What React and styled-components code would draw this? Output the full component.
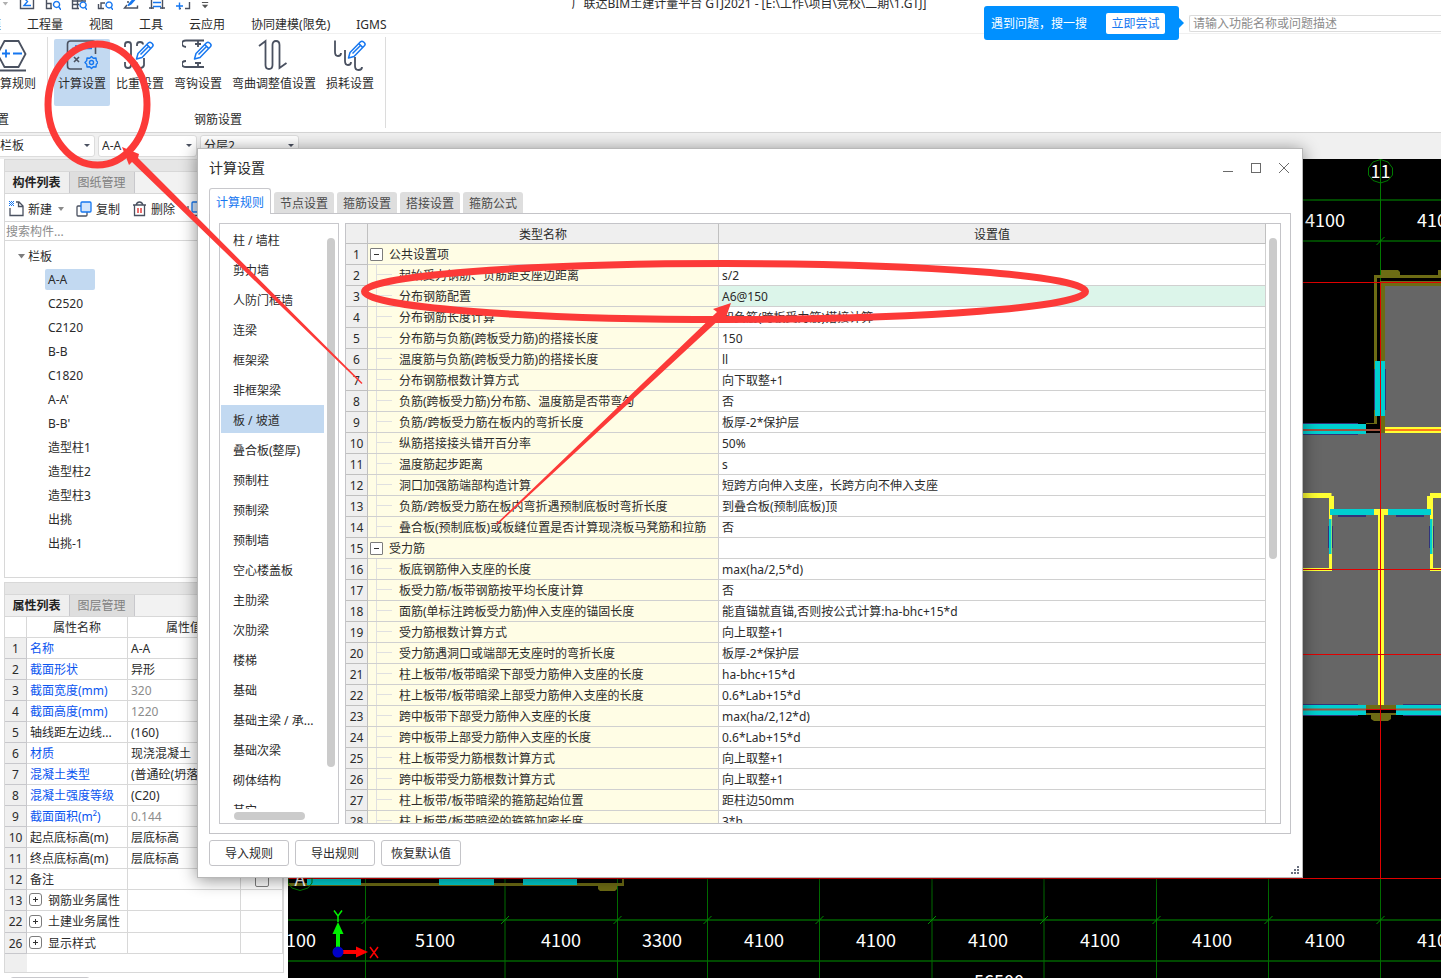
import React from "react";
import styled, { createGlobalStyle, css } from "styled-components";

const GlobalStyle = createGlobalStyle`
  * { box-sizing: border-box; }
  html, body { margin: 0; height: 100%; }
  body, button, input, select, table {
    font-family: "Noto Sans", "Noto Sans CJK SC", sans-serif;
    font-size: 12px;
    color: #2b2b2b;
  }
  button { cursor: pointer; }
  ul { list-style: none; margin: 0; padding: 0; }
`;

const blue = "#1677f0";
const ink = "#4a5160";
const line = "#d8d8d8";
const red = "#fc3a38";

/* ---------- window frame ---------- */

const Screen = styled.div`
  position: relative;
  display: flex;
  flex-direction: column;
  height: 100vh;
  overflow: hidden;
  background: #fff;
`;

const TitleBar = styled.header`
  display: flex;
  align-items: flex-end;
  height: 14px;
  overflow: hidden;
`;

const QuickTools = styled.div`
  flex: 1;
  display: flex;
  align-items: center;
  gap: 10px;
  height: 16px;
  margin-bottom: 4px;
`;

const QuickButton = styled.button`
  border: 0;
  padding: 0;
  background: none;
  width: ${(p) => (p.$narrow ? 9 : 16)}px;
  height: 16px;
  svg { display: block; width: 100%; height: 16px; }
`;

const AppTitle = styled.h1`
  flex: none;
  margin: 0;
  font-size: 12px;
  font-weight: 400;
  line-height: 16px;
  padding-bottom: 2px;
`;

const TitleRest = styled.div`
  flex: 1;
  margin-right: -57px;
`;

const MenuRow = styled.nav`
  flex: none;
  display: flex;
  align-items: center;
  gap: 26px;
  height: 20px;
  margin-left: -23px;
  border-bottom: 1px solid #f0f0f0;
`;

const MenuItem = styled.button`
  flex: none;
  border: 0;
  padding: 2px 0 0;
  background: none;
  line-height: 17px;
`;

const HelpSearch = styled.input`
  margin-left: auto;
  width: 252px;
  height: 17px;
  padding: 0 3px;
  border: 1px solid #dcdcdc;
  border-right: 0;
  border-radius: 2px 0 0 2px;
  &::placeholder { color: #8c8c8c; }
`;

const Callout = styled.aside`
  position: absolute;
  top: 6px;
  right: 262px;
  display: flex;
  align-items: center;
  justify-content: space-between;
  width: 195px;
  height: 34px;
  padding: 0 14px 0 7px;
  border-radius: 3px;
  background: #0090ff;
  color: #fff;
  &::after {
    content: "";
    position: absolute;
    left: 100%;
    top: 12px;
    border: 5px solid transparent;
    border-left-color: #0090ff;
    border-right: 0;
  }
`;

const CalloutButton = styled.button`
  width: 59px;
  height: 21px;
  padding: 0;
  border: 0;
  border-radius: 2px;
  background: #fff;
  color: ${blue};
`;

/* ---------- ribbon ---------- */

const Ribbon = styled.section`
  flex: none;
  display: flex;
  height: 99px;
  padding: 3px 0 4px;
  border-bottom: 1px solid #d4d4d4;
`;

const RibbonGroup = styled.div`
  display: flex;
  flex-direction: column;
  justify-content: space-between;
  border-right: 1px solid #dcdcdc;
  padding: 2px 7px 0 6px;
  margin-left: ${(p) => (p.$cut ? -22 : 0)}px;
`;

const RibbonTools = styled.div`
  display: flex;
  gap: 2px;
`;

const RibbonButton = styled.button`
  display: flex;
  flex-direction: column;
  align-items: center;
  gap: 3px;
  height: 67px;
  padding: 0 4px;
  border: 0;
  border-radius: 2px;
  background: ${(p) => (p.$active ? "#c2d9f1" : "none")};
  line-height: 18px;
  white-space: nowrap;
  svg { display: block; width: 32px; height: 33px; }
`;

const GroupLabel = styled.div`
  padding-left: ${(p) => (p.$left ? 1 : 4)}px;
  text-align: ${(p) => (p.$left ? "left" : "center")};
  line-height: 16px;
`;

const SelectBar = styled.div`
  flex: none;
  display: flex;
  gap: 3px;
  height: 26px;
  padding: 2px 0;
  background: #f0f0f0;
  margin-left: -4px;
`;

const SelectBox = styled.label`
  position: relative;
  width: 99px;
  height: 22px;
  select {
    width: 100%;
    height: 22px;
    padding: 0 3px 2px;
    border: 1px solid #dcdcdc;
    border-radius: 3px;
    background: #fff;
    appearance: none;
  }
  &::after {
    content: "";
    position: absolute;
    right: 5px;
    top: 9px;
    border: 3px solid transparent;
    border-top-color: ${ink};
    border-bottom: 0;
  }
`;

/* ---------- side panels ---------- */

const Workspace = styled.main`
  flex: 1;
  min-height: 0;
  display: flex;
`;

const Side = styled.aside`
  flex: none;
  display: flex;
  flex-direction: column;
  width: 288px;
  padding: 0 4px;
  background: #fff;
`;

const Panel = styled.section`
  flex: none;
  border: 1px solid ${line};
  border-top: 0;
  margin-bottom: 4px;
`;

const PanelGrip = styled.div`
  height: 12px;
  border-top: 1px solid ${line};
  background: #e6e6e6;
`;

const PanelTabs = styled.div`
  display: flex;
  height: 23px;
  background: #f2f2f2;
  border-top: 1px solid ${line};
  border-bottom: 1px solid ${line};
`;

const PanelTab = styled.button`
  width: 65px;
  padding: 0 1px 2px 0;
  border: 0;
  border-right: 1px solid #c8c8cc;
  background: ${(p) => (p.$active ? "#efefef" : "#dedede")};
  color: ${(p) => (p.$active ? "#222" : "#808080")};
  font-weight: ${(p) => (p.$active ? 700 : 400)};
`;

const Toolbar = styled.div`
  display: flex;
  align-items: center;
  height: 28px;
  padding: 2px 0 0 4px;
  overflow: hidden;
  border-bottom: 1px solid ${line};
`;

const ToolButton = styled.button`
  flex: none;
  display: flex;
  align-items: center;
  gap: 4px;
  margin-right: 12px;
  padding: 0;
  border: 0;
  background: none;
  svg { display: block; }
`;

const SearchInput = styled.input`
  display: block;
  width: 100%;
  height: 19px;
  padding: 0 1px;
  border: 0;
  border-bottom: 1px solid ${line};
  &::placeholder { color: #8c8c8c; }
`;

const Tree = styled.ul`
  height: 336px;
  padding-top: 3px;
`;

const TreeRoot = styled.button`
  display: flex;
  align-items: center;
  gap: 3px;
  height: 24px;
  margin-left: 13px;
  padding: 0;
  border: 0;
  background: none;
`;

const TreeItem = styled.button`
  display: block;
  min-width: 50px;
  height: 21px;
  margin: 1px 0 3px 40px;
  padding: 0 3px;
  border: 0;
  border-radius: 2px;
  background: ${(p) => (p.$active ? "#c2d9f1" : "none")};
  text-align: left;
  line-height: 21px;
`;

const PropTable = styled.table`
  table-layout: fixed;
  width: 278px;
  border-spacing: 0;
  th, td {
    height: 21px;
    padding: 2px 3px 0;
    border-right: 1px solid ${line};
    border-bottom: 1px solid ${line};
    line-height: 18px;
    font-weight: 400;
    white-space: nowrap;
    overflow: hidden;
  }
  tbody th { padding: 2px 0 0; background: #efefef; border-color: #c8c8cc; }
`;

const PropName = styled.td`
  color: ${(p) => (p.$link ? "#0a55f0" : "#2b2b2b")};
`;

const PropValue = styled.td`
  color: ${(p) => (p.$muted ? "#8c8c8c" : "#2b2b2b")};
`;

const PropFill = styled.div`
  width: 22px;
  height: 18px;
  background: #efefef;
`;

const PropCheck = styled.input`
  display: block;
  appearance: none;
  width: 14px;
  height: 14px;
  margin: 0 auto;
  border: 1px solid #808080;
  border-radius: 2px;
  background: #fff;
`;

const Expander = styled.button`
  position: relative;
  flex: none;
  display: inline-block;
  vertical-align: middle;
  width: 13px;
  height: 13px;
  margin: ${(p) => (p.$round ? "0 6px 4px -1px" : "0 6px 0 0")};
  padding: 0;
  border: 1px solid #7c7c7c;
  border-radius: ${(p) => (p.$round ? 3 : 1)}px;
  background: #fff;
  &::before {
    content: "";
    position: absolute;
    left: 3px;
    top: 5px;
    width: 5px;
    height: 1px;
    background: #333;
  }
  ${(p) =>
    p.$plus &&
    css`
      &::after {
        content: "";
        position: absolute;
        left: 5px;
        top: 3px;
        width: 1px;
        height: 5px;
        background: #333;
      }
    `}
`;

const PropButton = styled.button`
  flex: none;
  width: 80px;
  height: 24px;
  margin-left: 6px;
  border: 1px solid #c8c8cc;
  border-radius: 3px;
  background: #fff;
`;

const Drawing = styled.div`
  flex: 1;
  min-width: 0;
  background: #000;
  svg { display: block; width: 100%; height: 100%; }
  text { font-family: "Noto Sans CJK SC", sans-serif; font-size: 18px; fill: #fff; text-anchor: middle; }
`;

/* ---------- settings dialog ---------- */

const Dialog = styled.section`
  position: absolute;
  top: 148px;
  right: 138px;
  bottom: 100px;
  left: 197px;
  display: flex;
  flex-direction: column;
  padding: 0 11px 11px;
  border: 1px solid #b8b8b8;
  background: #fff;
  box-shadow: 0 2px 16px rgba(0, 0, 0, 0.45);
`;

const DialogHead = styled.header`
  flex: none;
  display: flex;
  align-items: center;
  height: 39px;
  padding-bottom: 1px;
  h2 { flex: 1; margin: 0; font-size: 14px; font-weight: 400; line-height: 20px; }
`;

const WindowButton = styled.button`
  width: 28px;
  height: 28px;
  padding: 8px;
  border: 0;
  background: none;
  svg { display: block; }
  &:last-child { margin-right: -7px; }
`;

const DialogTabs = styled.div`
  flex: none;
  display: flex;
  align-items: flex-end;
  gap: 3px;
  height: 26px;
  margin-bottom: -1px;
`;

const DialogTab = styled.button`
  position: relative;
  width: ${(p) => (p.$active ? 62 : 60)}px;
  height: ${(p) => (p.$active ? 26 : 21)}px;
  margin-bottom: ${(p) => (p.$active ? 0 : 1)}px;
  padding: 0;
  border: ${(p) => (p.$active ? "1px solid #c8c8cc" : "0")};
  border-bottom: 0;
  border-radius: 3px 3px 0 0;
  background: ${(p) => (p.$active ? "#fff" : "#dedede")};
  color: ${(p) => (p.$active ? blue : "#4a4a4a")};
`;

const DialogPanel = styled.div`
  flex: 1;
  min-height: 0;
  display: flex;
  gap: 6px;
  padding: 9px;
  border: 1px solid #c4c4c8;
`;

const Categories = styled.div`
  flex: none;
  display: flex;
  width: 120px;
  border: 1px solid #c8c8cc;
  padding: 1px;
`;

const CategoryColumn = styled.div`
  flex: 1;
  min-width: 0;
  display: flex;
  flex-direction: column;
`;

const CategoryList = styled.ul`
  flex: 1;
  min-height: 0;
  overflow: hidden;
`;

const Category = styled.button`
  display: block;
  width: 103px;
  height: 28px;
  margin-bottom: 2px;
  padding: 1px 0 0 12px;
  border: 0;
  background: ${(p) => (p.$active ? "#c2d9f1" : "none")};
  text-align: left;
  white-space: nowrap;
`;

const ThumbX = styled.div`
  flex: none;
  width: 71px;
  height: 8px;
  margin: 3px 0 2px 13px;
  border-radius: 4px;
  background: #cbcbcb;
`;

const ThumbY = styled.div`
  flex: none;
  width: 8px;
  height: ${(p) => p.$size};
  margin: ${(p) => (p.$wide ? "14px 3px 0" : "13px 2px 0")};
  border-radius: 4px;
  background: #cbcbcb;
`;

const RuleFrame = styled.div`
  flex: 1;
  min-width: 0;
  display: flex;
  overflow: hidden;
  border: 1px solid #c4c4c8;
`;

const RuleScroll = styled.div`
  flex: 1;
  min-width: 0;
  overflow: hidden;
`;

const RuleTable = styled.table`
  table-layout: fixed;
  width: 100%;
  border-spacing: 0;
  th, td {
    height: 21px;
    padding: 2px 3px 0;
    border-right: 1px solid #d0d0d0;
    border-bottom: 1px solid #d0d0d0;
    line-height: 18px;
    font-weight: 400;
    white-space: nowrap;
    overflow: hidden;
  }
  thead th { height: 20px; line-height: 17px; background: #efefef; border-color: #c0c0c0; }
  tbody th { padding: 2px 0 0; background: #efefef; border-color: #c0c0c0; }
`;

const NameCell = styled.td`
  && { padding: 0 0 0 2px; }
  background: #fffde5;
`;

const NameInner = styled.div`
  display: flex;
  align-items: center;
  height: 20px;
`;

const NameText = styled.span`
  padding-top: 2px;
`;

const Guide = styled.span`
  flex: none;
  position: relative;
  width: 16px;
  height: 20px;
  margin: 0 7px 0 6px;
  border-left: 1px solid #e0e0e0;
  &::after {
    content: "";
    position: absolute;
    top: 9px;
    left: 0;
    width: 15px;
    height: 1px;
    background: #e0e0e0;
  }
`;

const ValueCell = styled.td`
  background: ${(p) => (p.$active ? "#dcf5ea" : "#fff")};
`;

const DialogFoot = styled.footer`
  flex: none;
  display: flex;
  gap: 6px;
  padding-top: 6px;
  margin-right: -8px;
`;

const FootButton = styled.button`
  width: 80px;
  height: 26px;
  padding: 0;
  border: 1px solid #c4c4c8;
  border-radius: 3px;
  background: #fff;
`;

const ResizeGrip = styled.svg`
  align-self: flex-end;
  width: 8px;
  height: 8px;
  margin: 0 0 -8px auto;
`;

const Markup = styled.svg`
  position: absolute;
  top: 0;
  left: 0;
  width: 100%;
  height: 100%;
  pointer-events: none;
`;

/* ---------- icons ---------- */

const Pencil = ({ x = 0, y = 0 }) => (
  <g transform={`translate(${x} ${y})`} stroke={blue} strokeWidth="1.5" fill="none" strokeLinejoin="round">
    <path d="M.5 18 2 12.500 12.5 1.8Q14 .6 15.6 2L16.4 2.8Q17.8 4.3 16.4 5.7L6 16.500Z" />
    <path d="M10.8 3.6 14.6 7.4M4.5 13.5 12 6" />
  </g>
);

const ribbonIcons = {
  rules: (
    <svg viewBox="0 0 32 33" fill="none" strokeWidth="1.8">
      <path stroke={ink} d="M8.500 2H22.500L29.500 15 22.500 28H8.500L1.500 15ZM2 31.500H30" />
      <path stroke={blue} d="M6 14.500H14M10 10.500V18.500M17 14.500H26" />
    </svg>
  ),
  calc: (
    <svg viewBox="0 0 32 33" fill="none" strokeWidth="1.6">
      <path stroke={ink} d="M16 30H4.500Q1.500 30 1.500 27V5Q1.500 2 4.500 2H26.500Q29.500 2 29.500 5V15M8 18 13 23M13 18 8 23" />
      <path stroke={blue} d="M6 9.500H14M10 6V13M18 9.500H26" />
      <g stroke={blue} strokeWidth="1.4" strokeLinejoin="round">
        <path d="M25.500 17.500 27.300 19.200 30 19 30.300 21.600 32 23.500 30.300 25.400 30 28 27.300 27.800 25.500 29.500 23.700 27.800 21 28 20.700 25.400 19 23.500 20.700 21.600 21 19 23.700 19.200Z" />
        <circle cx="25.500" cy="23.500" r="2" />
      </g>
    </svg>
  ),
  weight: (
    <svg viewBox="0 0 32 33" fill="none" strokeWidth="1.8">
      <path stroke={ink} d="M1 8V5.500Q1 3 4 3T7 5.500V26Q7 29 4 29T1 26V23M13 7V5.500Q13 3 16 3T19 5.500M12.500 23V26Q12.500 29 16 29T20 26V19" />
      <Pencil x={12} y={2} />
    </svg>
  ),
  hook: (
    <svg viewBox="0 0 32 33" fill="none" strokeWidth="1.8">
      <path stroke={ink} d="M22 1.500H4Q0 1.500 0 4.500T4 8M13 5H19M16 2V8M22 28H4Q0 28 0 25T4 22M13 24H19M16 24V28" />
      <Pencil x={12} y={2} />
    </svg>
  ),
  bend: (
    <svg viewBox="0 0 32 33" fill="none" strokeWidth="1.8">
      <path stroke={ink} d="M1 7 7.500 2V26Q7.500 30 11 30T14.500 26V6Q14.500 2 18 2T21.500 6V29L28.500 24" />
    </svg>
  ),
  loss: (
    <svg viewBox="0 0 32 33" fill="none" strokeWidth="1.8">
      <path stroke={ink} d="M1 1.500V13Q1 17 4 17T7 14M11 11V22Q11 26 14 26T17 23M21 18V27Q21 31 24.500 31T28 28" />
      <Pencil x={14} y={1} />
    </svg>
  ),
};

const quickIcons = [
  <path key="0" d="M14.500 0V14.500H1.500V0" />,
  <path key="1" d="M7 14.500H1.500V0M1.500 9.500H6V14M14.500 0V5" />,
  <path key="2" d="M8 14.500H1.500V0M1.500 7H15M1.500 10.500H8M6.500 3V14M11 0V7" />,
  <path key="3" d="M7 14.500H1.500V10M1.500 5H6V0M4 14V9H8M14.500 0V5" />,
  <path key="4" d="M4 11 1.500 14H14.500V11.500M6 8H4" />,
  <path key="5" d="M2.500 0V15M13.500 0V15M0 14H5M11 14H16M0 4H5M11 4H16" />,
  <path key="6" d="M14.500 0V5M14.500 8V14.500H10M1.500 6V0M6 14.500H4" />,
];
const quickAccents = [
  <path key="0" d="M11.500 4H5L8.500 7.500 5 11.500H12" />,
  <path key="1" d="M14 13 16 16M11.500 7.500a3 3 0 1 0 .1 0" />,
  <path key="2" d="M14 13 16 16M12 8a3 3 0 1 0 .1 0" />,
  <path key="3" d="M14 13 16 16M12 8a3 3 0 1 0 .1 0" />,
  <path key="4" d="M14 1 7 9 5 11.500 8 10 15 2" />,
  <path key="5" d="M4 5H12M4 8.500H12M4 12.500H12" />,
  <path key="6" d="M1 12H8M4.500 8.500V15.500" />,
];

/* ---------- data ---------- */

const menus = ["建模", "工程量", "视图", "工具", "云应用", "协同建模(限免)", "IGMS"];
const ribbonTools = [
  ["计算设置", "calc"],
  ["比重设置", "weight"],
  ["弯钩设置", "hook"],
  ["弯曲调整值设置", "bend"],
  ["损耗设置", "loss"],
];
const components = ["A-A", "C2520", "C2120", "B-B", "C1820", "A-A'", "B-B'", "造型柱1", "造型柱2", "造型柱3", "出挑", "出挑-1"];
const props = [
  { n: 1, name: "名称", value: "A-A", link: true },
  { n: 2, name: "截面形状", value: "异形", link: true },
  { n: 3, name: "截面宽度(mm)", value: "320", link: true, muted: true },
  { n: 4, name: "截面高度(mm)", value: "1220", link: true, muted: true },
  { n: 5, name: "轴线距左边线...", value: "(160)" },
  { n: 6, name: "材质", value: "现浇混凝土", link: true },
  { n: 7, name: "混凝土类型", value: "(普通砼(坍落度", link: true },
  { n: 8, name: "混凝土强度等级", value: "(C20)", link: true },
  { n: 9, name: "截面面积(m²)", value: "0.144", link: true, muted: true },
  { n: 10, name: "起点底标高(m)", value: "层底标高" },
  { n: 11, name: "终点底标高(m)", value: "层底标高" },
  { n: 12, name: "备注", value: "", check: true },
  { n: 13, name: "钢筋业务属性", group: true },
  { n: 22, name: "土建业务属性", group: true },
  { n: 26, name: "显示样式", group: true },
];
const categories = ["柱 / 墙柱", "剪力墙", "人防门框墙", "连梁", "框架梁", "非框架梁", "板 / 坡道", "叠合板(整厚)", "预制柱", "预制梁", "预制墙", "空心楼盖板", "主肋梁", "次肋梁", "楼梯", "基础", "基础主梁 / 承...", "基础次梁", "砌体结构", "其它"];
const rules = [
  ["公共设置项", null],
  ["起始受力钢筋、负筋距支座边距离", "s/2"],
  ["分布钢筋配置", "A6@150"],
  ["分布钢筋长度计算", "和负筋(跨板受力筋)搭接计算"],
  ["分布筋与负筋(跨板受力筋)的搭接长度", "150"],
  ["温度筋与负筋(跨板受力筋)的搭接长度", "ll"],
  ["分布钢筋根数计算方式", "向下取整+1"],
  ["负筋(跨板受力筋)分布筋、温度筋是否带弯勾", "否"],
  ["负筋/跨板受力筋在板内的弯折长度", "板厚-2*保护层"],
  ["纵筋搭接接头错开百分率", "50%"],
  ["温度筋起步距离", "s"],
  ["洞口加强筋端部构造计算", "短跨方向伸入支座，长跨方向不伸入支座"],
  ["负筋/跨板受力筋在板内弯折遇预制底板时弯折长度", "到叠合板(预制底板)顶"],
  ["叠合板(预制底板)或板缝位置是否计算现浇板马凳筋和拉筋", "否"],
  ["受力筋", null],
  ["板底钢筋伸入支座的长度", "max(ha/2,5*d)"],
  ["板受力筋/板带钢筋按平均长度计算", "否"],
  ["面筋(单标注跨板受力筋)伸入支座的锚固长度", "能直锚就直锚,否则按公式计算:ha-bhc+15*d"],
  ["受力筋根数计算方式", "向上取整+1"],
  ["受力筋遇洞口或端部无支座时的弯折长度", "板厚-2*保护层"],
  ["柱上板带/板带暗梁下部受力筋伸入支座的长度", "ha-bhc+15*d"],
  ["柱上板带/板带暗梁上部受力筋伸入支座的长度", "0.6*Lab+15*d"],
  ["跨中板带下部受力筋伸入支座的长度", "max(ha/2,12*d)"],
  ["跨中板带上部受力筋伸入支座的长度", "0.6*Lab+15*d"],
  ["柱上板带受力筋根数计算方式", "向上取整+1"],
  ["跨中板带受力筋根数计算方式", "向上取整+1"],
  ["柱上板带/板带暗梁的箍筋起始位置", "距柱边50mm"],
  ["柱上板带/板带暗梁的箍筋加密长度", "3*h"],
];

/* ---------- plan drawing ---------- */

const gridX = [365.5, 505, 617.5, 707.5, 819.5, 932, 1044, 1156.5, 1268.5, 1380.5];
const spans = [[301, "100"], [435, "5100"], [561, "4100"], [662, "3300"], [764, "4100"], [876, "4100"], [988, "4100"], [1100, "4100"], [1212, "4100"], [1325, "4100"], [1437, "4100"]];
const cyan = "#00cfd0";
const olive = "#6d6c14";
const yellow = "#ffff33";

function Plan() {
  return (
    <svg viewBox="288 159 1153 819" preserveAspectRatio="xMinYMin slice" role="img" aria-label="平面图">
      <g fill="#666">
        <rect x="1385" y="286" width="56" height="147" />
        <rect x="1290" y="433" width="151" height="273" />
      </g>
      <g stroke="#004a00" strokeWidth="2">
        <path d="M1290 200H1441M1290 241H1441M288 920H1441M288 961H1441" />
      </g>
      <path stroke="#007800" d="M1380.500 159V282" />
      {gridX.map((x) => (
        <g key={x}>
          <path stroke="#006c00" d={`M${x} 879V978`} />
          <path stroke="#009000" d={`M${x - 4} 924 ${x + 4} 916`} />
        </g>
      ))}
      <path stroke="#009000" d="M1376.500 245 1384.500 237" />
      <g fill={olive}>
        <path d="M1374 275H1381V270H1398L1400 272V275H1438V270H1441V278H1377V424H1366V433H1380V281H1441V286H1385V433H1366V423H1374Z" />
        <path d="M1366 705H1396V709H1366ZM1366 713H1396V715H1391V719L1388 721H1374L1371 719V715H1366Z" />
        <path d="M288 883H622V878H624V886H617V889L615 891H600L598 889V886H288Z" />
      </g>
      <path fill="#000" d="M1366 425H1380V430H1366ZM1366 709H1396V713H1366Z" />
      <g fill="#33337a">
        <path d="M1303 423H1358V435H1303ZM1374 369H1386V410H1374ZM1338 515H1366V517H1338ZM1396 515H1424V517H1396ZM1328 526H1333V548H1328ZM1429 526H1434V548H1429ZM1303 704H1358V716H1303ZM1403 704H1441V716H1403Z" />
      </g>
      <g fill={yellow}>
        <path d="M1385 427H1441V433H1385Z" />
        <path d="M1290 493H1331.500V496H1334V509H1332V571H1290V568H1329V498H1290Z" />
        <path d="M1441 493H1430V496H1427V509H1430V571H1441V568H1433V498H1441Z" />
        <path d="M1374 509H1388V515H1384V705H1378V515H1374Z" />
      </g>
      <g fill={cyan}>
        <path d="M1290 424H1366V434H1290ZM1375 361H1385V416H1375ZM1330 509H1374V515H1330ZM1388 509H1431V515H1388ZM1329 519H1331.500V554H1329ZM1430 519H1432.500V554H1430ZM1290 705H1366V715H1290ZM1396 705H1441V715H1396Z" />
        <path d="M307 879H361V885H307ZM439 879H494V885H439ZM523 879H577V885H523Z" />
      </g>
      <path stroke="#a0533f" strokeWidth="2" d="M1290 430H1380M1290 709.500H1366M1396 709.500H1441" />
      <path stroke="#ff7a18" strokeWidth="2" d="M1385 430H1441" />
      <path stroke="#e00000" strokeWidth="1" d="M1290 282.500H1441M1290 569.500H1441M1290 654.500H1441M1366 709.500H1396M288 878.500H1441M1380.500 282V878" />
      <g fill="none" stroke="#007a00">
        <polygon points="1380.500,159.500 1388,162 1392.500,168 1392.500,175 1388,180.500 1380.500,183 1373,180.500 1368.500,175 1368.500,168 1373,162" />
        <polygon points="300,866.500 308,869 312,875 312,883 308,888 300,890.500 292,888 288,883 288,875 292,869" />
      </g>
      <text x="1380.500" y="178">11</text>
      <text x="300" y="886">A</text>
      <text x="1325" y="227">4100</text>
      <text x="1437" y="227">4100</text>
      {spans.map(([x, t]) => (
        <text key={x} x={x} y="947">{t}</text>
      ))}
      <text x="999" y="988">56500</text>
      <path stroke="#00f000" strokeWidth="4" d="M338 950V930" />
      <path fill="#00f000" d="M332.500 934 338 922 343.500 934Z" />
      <path stroke="#00f000" strokeWidth="1.500" fill="none" d="M334 910.500 338 916 342 910.500M338 916V922" />
      <path stroke="#f00" strokeWidth="4" d="M340 952H358" />
      <path fill="#f00" d="M356 946.500 368 952 356 957.500Z" />
      <path stroke="#f00" strokeWidth="1.500" d="M370 947 378 958M378 947 370 958" />
      <circle cx="338" cy="952" r="5.500" fill="#0000c8" />
    </svg>
  );
}

export default function App() {
  return (
    <Screen>
      <GlobalStyle />
      <TitleBar>
        <QuickTools>
          <QuickButton $narrow aria-label="更多">
            <svg viewBox="0 0 10 16"><path fill="#b0b0b0" d="M3 8H9L6 12Z" /></svg>
          </QuickButton>
          {quickIcons.map((shape, i) => (
            <QuickButton key={i} aria-label={`快捷工具${i + 1}`}>
              <svg viewBox="0 0 16 16" fill="none" strokeWidth="1.400">
                <g stroke={ink}>{shape}</g>
                <g stroke={blue}>{quickAccents[i]}</g>
              </svg>
            </QuickButton>
          ))}
          <QuickButton $narrow aria-label="自定义">
            <svg viewBox="0 0 10 16"><path fill="#555" d="M1 8H8V9H1ZM1 11H8L4.500 15Z" /></svg>
          </QuickButton>
        </QuickTools>
        <AppTitle>广联达BIM土建计量平台 GTJ2021 - [E:\工作\项目\竞校\二期\1.GTJ]</AppTitle>
        <TitleRest />
      </TitleBar>
      <MenuRow>
        {menus.map((m) => (
          <MenuItem key={m}>{m}</MenuItem>
        ))}
        <HelpSearch type="text" aria-label="搜索功能" placeholder="请输入功能名称或问题描述" />
      </MenuRow>
      <Callout>
        <span>遇到问题，搜一搜</span>
        <CalloutButton>立即尝试</CalloutButton>
      </Callout>

      <Ribbon>
        <RibbonGroup $cut>
          <RibbonTools>
            <RibbonButton>{ribbonIcons.rules}<span>计算规则</span></RibbonButton>
          </RibbonTools>
          <GroupLabel $left>设置</GroupLabel>
        </RibbonGroup>
        <RibbonGroup>
          <RibbonTools>
            {ribbonTools.map(([label, icon], i) => (
              <RibbonButton key={label} $active={i === 0}>
                {ribbonIcons[icon]}
                <span>{label}</span>
              </RibbonButton>
            ))}
          </RibbonTools>
          <GroupLabel>钢筋设置</GroupLabel>
        </RibbonGroup>
      </Ribbon>

      <SelectBar>
        {["栏板", "A-A", "分层2"].map((v) => (
          <SelectBox key={v}>
            <select aria-label={v}><option>{v}</option></select>
          </SelectBox>
        ))}
      </SelectBar>

      <Workspace>
        <Side>
          <Panel>
            <PanelGrip />
            <PanelTabs>
              <PanelTab $active>构件列表</PanelTab>
              <PanelTab>图纸管理</PanelTab>
            </PanelTabs>
            <Toolbar>
              <ToolButton>
                <svg width="15" height="16" viewBox="0 0 15 16" fill="none" stroke={ink} strokeWidth="1.300">
                  <path d="M1 7V14.500H14V5L10 1H7M9.500 1V5.500H14" />
                  <path stroke={blue} strokeWidth="1" strokeDasharray="1 1" d="M0 .5H5M1 1.500H5M0 2.500H5M1 3.500H5M0 4.500H5" />
                </svg>
                新建
                <svg width="8" height="6" viewBox="0 0 8 6"><path fill="#8a8a8a" d="M2 1H8L5 5Z" /></svg>
              </ToolButton>
              <ToolButton>
                <svg width="16" height="16" viewBox="0 0 16 16" strokeWidth="1.300">
                  <rect x="1" y="5" width="10" height="10" rx="1" fill="#fff" stroke={ink} />
                  <rect x="5" y="1" width="10" height="10" rx="1" fill="#d3e5fb" stroke={blue} />
                </svg>
                复制
              </ToolButton>
              <ToolButton>
                <svg width="15" height="16" viewBox="0 0 15 16" fill="none" stroke={ink} strokeWidth="1.300">
                  <path d="M1 4H14M4 4Q5 1 7.500 1T11 4M2.500 4V14.500H12.500V4" />
                  <path stroke="#e02020" d="M6 7V12M9 7V12" />
                </svg>
                删除
              </ToolButton>
              <ToolButton aria-label="层间复制">
                <svg width="16" height="16" viewBox="0 0 16 16" strokeWidth="1.300" fill="none">
                  <path stroke={ink} d="M1 5V11L5 14.500H11V12" />
                  <rect x="5" y="1" width="10" height="10" rx="1" fill="#d3e5fb" stroke={blue} />
                </svg>
              </ToolButton>
            </Toolbar>
            <SearchInput type="text" aria-label="搜索构件" placeholder="搜索构件..." />
            <Tree>
              <li>
                <TreeRoot>
                  <svg width="7" height="5" viewBox="0 0 7 5"><path fill="#7c7c7c" d="M0 0H7L3.500 4.500Z" /></svg>
                  栏板
                </TreeRoot>
                <ul>
                  {components.map((c, i) => (
                    <li key={c}><TreeItem $active={i === 0}>{c}</TreeItem></li>
                  ))}
                </ul>
              </li>
            </Tree>
          </Panel>

          <Panel>
            <PanelGrip />
            <PanelTabs>
              <PanelTab $active>属性列表</PanelTab>
              <PanelTab>图层管理</PanelTab>
            </PanelTabs>
            <PropTable>
              <colgroup>
                <col style={{ width: 22 }} />
                <col style={{ width: 101 }} />
                <col style={{ width: 113 }} />
                <col />
              </colgroup>
              <thead>
                <tr><th /><th>属性名称</th><th>属性值</th><th /></tr>
              </thead>
              <tbody>
                {props.map((p) => (
                  <tr key={p.n}>
                    <th scope="row">{p.n}</th>
                    <PropName $link={p.link}>
                      {p.group && <Expander $plus $round aria-label={`展开${p.name}`} />}
                      {p.name}
                    </PropName>
                    <PropValue $muted={p.muted}>{p.value}</PropValue>
                    <td>{p.check && <PropCheck type="checkbox" aria-label={p.name} />}</td>
                  </tr>
                ))}
              </tbody>
            </PropTable>
            <PropFill />
          </Panel>
          <PropButton aria-label="参数图" />
        </Side>
        <Drawing><Plan /></Drawing>
      </Workspace>

      <Dialog role="dialog" aria-labelledby="dialog-title">
        <DialogHead>
          <h2 id="dialog-title">计算设置</h2>
          <WindowButton aria-label="最小化">
            <svg width="12" height="12" viewBox="0 0 12 12"><path stroke="#6a6a6a" d="M1 9.500H11" /></svg>
          </WindowButton>
          <WindowButton aria-label="最大化">
            <svg width="12" height="12" viewBox="0 0 12 12"><rect x="1.500" y="1.500" width="9" height="9" fill="none" stroke="#6a6a6a" /></svg>
          </WindowButton>
          <WindowButton aria-label="关闭">
            <svg width="12" height="12" viewBox="0 0 12 12"><path stroke="#6a6a6a" d="M1 1 11 11M11 1 1 11" /></svg>
          </WindowButton>
        </DialogHead>
        <DialogTabs>
          {["计算规则", "节点设置", "箍筋设置", "搭接设置", "箍筋公式"].map((t, i) => (
            <DialogTab key={t} $active={i === 0}>{t}</DialogTab>
          ))}
        </DialogTabs>
        <DialogPanel>
          <Categories>
            <CategoryColumn>
              <CategoryList>
                {categories.map((c) => (
                  <li key={c}><Category $active={c === "板 / 坡道"}>{c}</Category></li>
                ))}
              </CategoryList>
              <ThumbX />
            </CategoryColumn>
            <ThumbY $size="529px" />
          </Categories>
          <RuleFrame>
            <RuleScroll>
              <RuleTable>
                <colgroup>
                  <col style={{ width: 22 }} />
                  <col style={{ width: 351 }} />
                  <col />
                </colgroup>
                <thead>
                  <tr><th /><th>类型名称</th><th>设置值</th></tr>
                </thead>
                <tbody>
                  {rules.map(([name, value], i) => (
                    <tr key={i}>
                      <th scope="row">{i + 1}</th>
                      <NameCell>
                        <NameInner>
                          {value === null ? <Expander aria-label={`折叠${name}`} /> : <Guide />}
                          <NameText>{name}</NameText>
                        </NameInner>
                      </NameCell>
                      <ValueCell $active={i === 2}>{value}</ValueCell>
                    </tr>
                  ))}
                </tbody>
              </RuleTable>
            </RuleScroll>
            <ThumbY $wide $size="321px" />
          </RuleFrame>
        </DialogPanel>
        <DialogFoot>
          <FootButton>导入规则</FootButton>
          <FootButton>导出规则</FootButton>
          <FootButton>恢复默认值</FootButton>
          <ResizeGrip viewBox="0 0 8 8" fill="#6a7080">
            <path d="M6 0H8V2H6ZM3 3H5V5H3ZM6 3H8V5H6ZM0 6H2V8H0ZM3 6H5V8H3ZM6 6H8V8H6Z" />
          </ResizeGrip>
        </DialogFoot>
      </Dialog>

      <Markup aria-hidden="true">
        <g fill="none" stroke={red} strokeWidth="7">
          <ellipse cx="97.500" cy="104.500" rx="49.500" ry="60.500" />
          <ellipse cx="725" cy="291.500" rx="360.500" ry="28" />
        </g>
        <g fill={red}>
          <path d="M122 147 139 154 138 158 362.500 383 361.500 384 132 162 129 165Z" />
          <path d="M731 303 713 309 717 312 496 524 497 525 722 317 725 320Z" />
        </g>
      </Markup>
    </Screen>
  );
}
